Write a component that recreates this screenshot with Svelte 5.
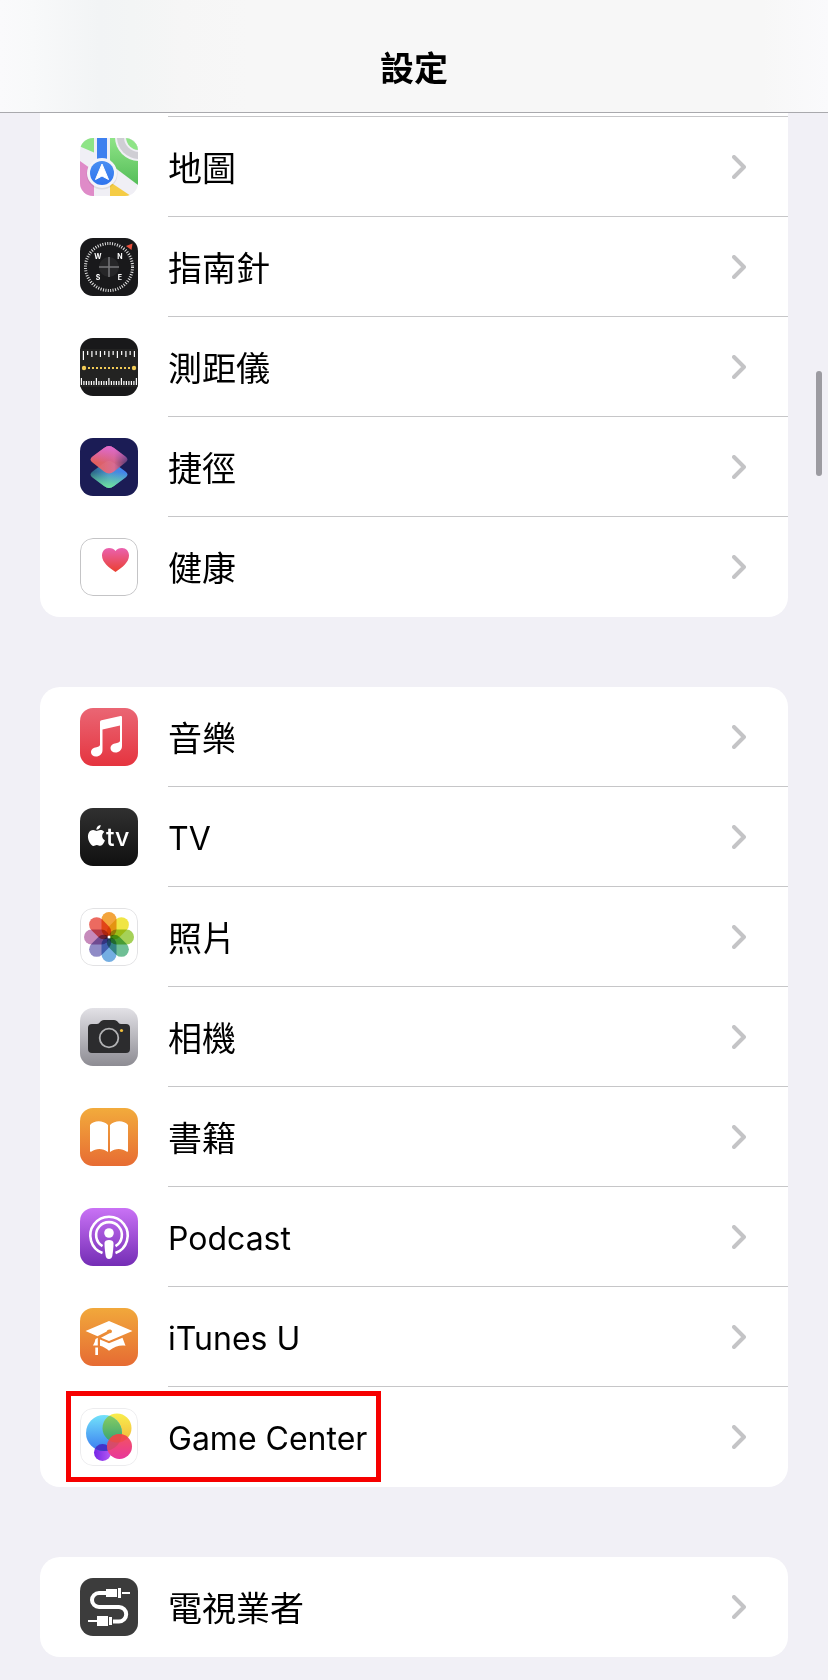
<script lang="ts">
	type Row = { icon: string; label: string; latin?: boolean; highlighted?: boolean };

	const groups: Row[][] = [
		[
			{ icon: 'maps', label: '地圖' },
			{ icon: 'compass', label: '指南針' },
			{ icon: 'measure', label: '測距儀' },
			{ icon: 'shortcuts', label: '捷徑' },
			{ icon: 'health', label: '健康' }
		],
		[
			{ icon: 'music', label: '音樂' },
			{ icon: 'tv', label: 'TV', latin: true },
			{ icon: 'photos', label: '照片' },
			{ icon: 'camera', label: '相機' },
			{ icon: 'books', label: '書籍' },
			{ icon: 'podcast', label: 'Podcast', latin: true },
			{ icon: 'itunesu', label: 'iTunes U', latin: true },
			{ icon: 'gamecenter', label: 'Game Center', latin: true, highlighted: true }
		],
		[{ icon: 'provider', label: '電視業者' }]
	];

	const petals = ['#f3a43c', '#f0e545', '#a5d158', '#6fbf95', '#74aee2', '#8f8bc6', '#c68abb', '#ec6a60'];
	const topTicks = [9, 4, 6, 4, 6, 4, 6, 4, 7, 4, 6, 4, 6];
	const longTicks = [0, 6, 11, 16, 22];
	const edges: Record<string, string> = { health: '#c4c4c6', photos: '#e2e2e4', gamecenter: '#ececee' };
</script>

{#snippet gradient(id: string, from: string, to: string)}
	<linearGradient {id} x1="0" y1="0" x2="0" y2="1">
		<stop offset="0" stop-color={from} />
		<stop offset="1" stop-color={to} />
	</linearGradient>
{/snippet}

{#snippet appIcon(name: string)}
	<svg class="icon" viewBox="0 0 58 58" aria-hidden="true">
		{#if name === 'maps'}
			<defs>
				{@render gradient('maps-green', '#8fe487', '#54bd58')}
				{@render gradient('maps-blue', '#4a8ff2', '#2f74ee')}
			</defs>
			<rect width="58" height="58" fill="#f0eff5" />
			<path d="M0 0h14v14.5L0 8.5z" fill="#8ee486" />
			<path d="M30 0h28v47L30 26z" fill="url(#maps-green)" />
			<circle cx="59" cy="-1" r="24" fill="#f0eff5" />
			<circle cx="59" cy="-1" r="22" fill="#cfced4" />
			<circle cx="59" cy="-1" r="15" fill="#f0eff5" />
			<circle cx="59" cy="-1" r="13" fill="#8ee486" />
			<path d="M0 23l14 10v25H0z" fill="#df8bc8" />
			<path d="M30 44l21 14H30z" fill="#f5cc45" />
			<path d="M17 0h10v24H17z" fill="#3e80ef" />
			<circle cx="22" cy="36" r="15.5" fill="#000" opacity=".08" />
			<circle cx="22" cy="35" r="15" fill="#f4f4f9" />
			<circle cx="22" cy="35" r="12" fill="url(#maps-blue)" />
			<path d="M22 26l6.5 15.5L22 38l-6.5 3.5z" fill="#fff" stroke="#fff" stroke-linejoin="round" />
		{:else if name === 'compass'}
			<rect width="58" height="58" fill="#19191b" />
			<circle cx="29" cy="29" r="10" fill="#262628" />
			<circle cx="29" cy="29" r="23.5" fill="none" stroke="#e4e4e4" stroke-width="3" stroke-dasharray="1 1.46" />
			<path d="M29 19v20M19 29h20" stroke="#77777a" stroke-width="1.5" />
			<path d="M46 8l6.5-2.5L51.5 12z" fill="#e8513d" />
			<g class="points" fill="#fff">
				<text x="18" y="21">W</text>
				<text x="40" y="21">N</text>
				<text x="18" y="42">S</text>
				<text x="40" y="42">E</text>
			</g>
		{:else if name === 'measure'}
			<rect width="58" height="58" fill="#19191a" />
			<rect y="11" width="58" height="38" fill="#232322" />
			<g fill="#fff">
				{#each topTicks as height, i}
					<rect x={2.8 + i * 4.25} y="13" width="1.2" {height} />
				{/each}
				{#each { length: 23 } as _, i}
					{@const height = longTicks.includes(i) ? 7 : 4}
					<rect x={0.8 + i * 2.5} y={47 - height} width="1.2" {height} />
				{/each}
			</g>
			<path d="M8 30h43" stroke="#f2cb57" stroke-width="2" stroke-dasharray="2 2" />
			<circle cx="4" cy="30" r="2.2" fill="#f2cb57" />
			<circle cx="54" cy="30" r="2.2" fill="#f2cb57" />
		{:else if name === 'shortcuts'}
			<defs>
				<linearGradient id="cut-top" x1=".1" y1=".6" x2="1" y2=".6">
					<stop offset="0" stop-color="#f0655c" />
					<stop offset=".6" stop-color="#e46a8c" />
					<stop offset="1" stop-color="#5a3c78" />
				</linearGradient>
				<linearGradient id="cut-glow" x1="0" y1="0" x2="0" y2="1">
					<stop offset="0" stop-color="#ee70dc" />
					<stop offset=".6" stop-color="#ee70dc" stop-opacity="0" />
				</linearGradient>
				<linearGradient id="cut-bottom" x1="0" y1=".4" x2="1" y2=".4">
					<stop offset="0" stop-color="#27627f" />
					<stop offset=".5" stop-color="#4a91d3" />
					<stop offset="1" stop-color="#3f7ff4" />
				</linearGradient>
				<linearGradient id="cut-green" x1="0" y1="0" x2="0" y2="1">
					<stop offset=".4" stop-color="#6fe59b" stop-opacity="0" />
					<stop offset="1" stop-color="#6fe59b" />
				</linearGradient>
			</defs>
			<rect width="58" height="58" fill="#1b1c55" />
			<path d="M24 25q5-4 10 0l11.500 8.500q4 3 0 6L34 48q-5 4-10 0L12.500 39.500q-4-3 0-6z" fill="url(#cut-bottom)" />
			<path d="M24 25q5-4 10 0l11.500 8.500q4 3 0 6L34 48q-5 4-10 0L12.500 39.500q-4-3 0-6z" fill="url(#cut-green)" />
			<g opacity=".93">
				<path d="M24 10q5-4 10 0l11.500 8.500q4 3 0 6L34 33.500q-5 4-10 0L12.500 24.500q-4-3 0-6z" fill="url(#cut-top)" />
				<path d="M24 10q5-4 10 0l11.500 8.500q4 3 0 6L34 33.500q-5 4-10 0L12.500 24.500q-4-3 0-6z" fill="url(#cut-glow)" />
			</g>
		{:else if name === 'health'}
			<defs>{@render gradient('heart', '#ea62b0', '#ea4030')}</defs>
			<rect width="58" height="58" fill="#fff" />
			<path d="M35.500 34C29 29.500 22 24.500 22 17.500C22 13 25 10 29 10c3 0 5.200 1 6.500 3C36.800 11 39 10 42 10c4 0 7 3 7 7.500C49 24.500 42 29.500 35.500 34z" fill="url(#heart)" />
		{:else if name === 'music'}
			<defs>{@render gradient('music-bg', '#ea6674', '#e5343f')}</defs>
			<rect width="58" height="58" fill="url(#music-bg)" />
			<path d="M20 14q0-1.500 1.500-1.800L40.500 8q1.500-.3 1.500 1v29c0 4-3 6.500-6.500 6.500c-3 0-5-1.700-5-4.300c0-3 2.400-4.400 5.500-5q4-.5 4-2.700V17.500l-17.500 4V42c0 4-3 6.500-6.500 6.500c-3 0-5-1.700-5-4.300c0-3 2.400-4.400 5.500-5q3.500-.5 3.500-2.700z" fill="#fff" />
		{:else if name === 'tv'}
			<defs>{@render gradient('tv-bg', '#303030', '#101010')}</defs>
			<rect width="58" height="58" fill="url(#tv-bg)" />
			<path
				transform="translate(6 17) scale(.87)"
				fill="#fff"
				d="M12.152 6.896c-.948 0-2.415-1.078-3.96-1.04-2.04.027-3.91 1.183-4.961 3.014-2.117 3.675-.546 9.103 1.519 12.09 1.013 1.454 2.208 3.09 3.792 3.039 1.52-.065 2.09-.987 3.935-.987 1.831 0 2.35.987 3.96.948 1.637-.026 2.676-1.48 3.676-2.948 1.156-1.688 1.636-3.325 1.662-3.415-.039-.013-3.182-1.221-3.22-4.857-.026-3.04 2.48-4.494 2.597-4.559-1.429-2.09-3.623-2.324-4.39-2.376-2-.156-3.675 1.09-4.61 1.09zM15.53 3.83c.843-1.012 1.4-2.427 1.245-3.83-1.207.052-2.662.805-3.532 1.818-.78.896-1.454 2.338-1.273 3.714 1.338.104 2.715-.688 3.559-1.701"
			/>
			<text class="tv-word" x="26" y="38" fill="#fff">tv</text>
		{:else if name === 'photos'}
			<rect width="58" height="58" fill="#fff" />
			<g class="petals">
				{#each petals as color, i}
					<rect x="21.5" y="4" width="15" height="25" rx="7.5" fill={color} transform="rotate({i * 45} 29 29)" />
				{/each}
			</g>
			<circle cx="29" cy="29" r="1.5" fill="#fff" />
		{:else if name === 'camera'}
			<defs>{@render gradient('camera-bg', '#e2e1e6', '#8d8c93')}</defs>
			<rect width="58" height="58" fill="url(#camera-bg)" />
			<path d="M12 16h5c3 0 3-4 7-4h10c4 0 4 4 7 4h5q4 0 4 4v21q0 4-4 4H12q-4 0-4-4V20q0-4 4-4z" fill="#2c2c2e" />
			<circle cx="29" cy="30" r="9.3" fill="#28282a" stroke="#b2b2b4" stroke-width="1.8" />
			<circle cx="41.5" cy="22.5" r="1.6" fill="#f3c13c" />
		{:else if name === 'books'}
			<defs>{@render gradient('books-bg', '#f2ab3c', '#e76c33')}</defs>
			<rect width="58" height="58" fill="url(#books-bg)" />
			<path d="M10 17c4-5 13-5 18 0v27c-5-4-12-4-16.500-.5q-1.500.8-1.500-.5zM48 17c-4-5-13-5-18 0v27c5-4 12-4 16.500-.5q1.500.8 1.500-.5z" fill="#fff" />
		{:else if name === 'podcast'}
			<defs>{@render gradient('pod-bg', '#c972f5', '#742db5')}</defs>
			<rect width="58" height="58" fill="url(#pod-bg)" />
			<g fill="none" stroke="#fff" stroke-width="2.6">
				<path d="M22.500 45A18.700 18.700 0 1 1 35.500 45" />
				<path d="M22.500 38.200A12.900 12.900 0 1 1 35.500 38.200" />
			</g>
			<circle cx="29" cy="25" r="4.8" fill="#fff" />
			<path d="M24.500 35c0-2 2-3 4.500-3s4.500 1 4.500 3c0 4-.5 9-1.200 13c-.4 2-1.500 3-3.300 3s-2.900-1-3.300-3c-.7-4-1.200-9-1.200-13z" fill="#fff" />
		{:else if name === 'itunesu'}
			<defs>{@render gradient('itu-bg', '#f1a83b', '#e66b33')}</defs>
			<rect width="58" height="58" fill="url(#itu-bg)" />
			<path d="M29 13l23.500 10L29 33l-8-3.300L29.500 25.200q2.500.3 2.500-2c0-2.400-5-2.400-5.300.3L17.500 28.200L5.500 23z" fill="#fff" />
			<path d="M20 31.500l9 3.800l13.500-5.500l3 8c-5-1-11 .5-16.500 5c-3-2.500-5.500-4-9-5zM15.500 31l2.300-1.200v7.700h-4.800q2-3 2.500-6.500zM15.300 39.500h2.700v7.500h-2.700z" fill="#fff" />
		{:else if name === 'gamecenter'}
			<defs>
				{@render gradient('gc-blue', '#72e2fa', '#3a7cf0')}
				{@render gradient('gc-yellow', '#f9ee4c', '#f2b73e')}
				{@render gradient('gc-pink', '#f4555e', '#e8369b')}
				{@render gradient('gc-green', '#8fd060', '#35a274')}
				<linearGradient id="gc-purple">
					<stop offset="0" stop-color="#7426e6" />
					<stop offset="1" stop-color="#b75af2" />
				</linearGradient>
				<clipPath id="gc-clip"><circle cx="24" cy="25" r="18" /></clipPath>
				<clipPath id="gc-clip-yellow"><circle cx="37" cy="20" r="14.5" /></clipPath>
			</defs>
			<rect width="58" height="58" fill="#fff" />
			<circle cx="22.5" cy="44.5" r="8.5" fill="url(#gc-purple)" />
			<circle cx="37" cy="20" r="14.5" fill="url(#gc-yellow)" />
			<circle cx="24" cy="25" r="18" fill="url(#gc-blue)" />
			<circle cx="37" cy="20" r="14.5" fill="url(#gc-green)" clip-path="url(#gc-clip)" />
			<circle cx="22.5" cy="44.5" r="8.5" fill="#4532c8" clip-path="url(#gc-clip)" />
			<circle cx="39.5" cy="38.5" r="12.5" fill="url(#gc-pink)" />
			<circle cx="39.5" cy="38.5" r="12.5" fill="#b8505c" opacity=".45" clip-path="url(#gc-clip)" />
			<circle cx="39.5" cy="38.5" r="12.5" fill="#f04a3c" opacity=".6" clip-path="url(#gc-clip-yellow)" />
		{:else if name === 'provider'}
			<rect width="58" height="58" fill="#3c3c3c" />
			<path d="M26 15h-7a7 7 0 0 0 0 14h20a7.200 7.200 0 0 1 0 14.400h-6" fill="none" stroke="#fff" stroke-width="4" />
			<path d="M26 11h11v8H26zM38 10h3v10h-3zM42 14h8v2h-8zM17 38h11v10H17zM29 39h3v8h-3zM8 42h9v2H8z" fill="#fff" />
		{/if}
		{#if edges[name]}
			<rect x=".5" y=".5" width="57" height="57" rx="12.5" fill="none" stroke={edges[name]} />
		{/if}
	</svg>
{/snippet}

<div class="screen">
	<header class="navbar">
		<h1>設定</h1>
	</header>

	<main>
		{#each groups as rows, g}
			<ul class="group" class:continued={g === 0}>
				{#each rows as row}
					<li>
						<a class="row" href="#{row.icon}">
							<span class="entry" class:highlighted={row.highlighted}>
								{@render appIcon(row.icon)}
								<span class="label" class:latin={row.latin}>{row.label}</span>
							</span>
							<svg class="chevron" viewBox="0 0 14 24" aria-hidden="true">
								<path d="M2 2l10 10L2 22" />
							</svg>
						</a>
					</li>
				{/each}
			</ul>
		{/each}
	</main>

	<div class="scroll-thumb" aria-hidden="true"></div>
</div>

<style>
	:global(body) {
		margin: 0;
		background: #f1f0f6;
	}

	.screen {
		position: relative;
		min-height: 100vh;
		background: #f1f0f6;
		color: #000;
		font-family: Inter, 'Noto Sans CJK TC', sans-serif;
	}

	.navbar {
		padding: 47px 16px 21px;
		border-bottom: 1px solid #a9a9ad;
		background: linear-gradient(to right, #fafafc 0, #f8f9fa 4%, #f2f4f5 12%, #f3f5f5 16%, #f6f6f6 22%, #f7f7f7 30%, #f7f7f7 92%, #fafafc 100%);
		text-align: center;
	}

	h1 {
		margin: 0;
		font-size: 34px;
		font-weight: 700;
		line-height: 44px;
	}

	main {
		display: flex;
		flex-direction: column;
		gap: 70px;
		padding: 0 40px 23px;
	}

	.group {
		margin: 0;
		padding: 0;
		border-radius: 20px;
		background: #fff;
		list-style: none;
	}

	/* The row above the first visible one is hidden behind the bar */
	.group.continued {
		border-radius: 0 0 20px 20px;
	}
	.group.continued::before {
		content: '';
		display: block;
		height: 3px;
		margin-left: 128px;
		border-bottom: 1px solid #c6c6c8;
	}

	.row {
		display: flex;
		align-items: center;
		justify-content: space-between;
		height: 100px;
		padding: 0 42px 0 40px;
		box-sizing: border-box;
		background: linear-gradient(#c6c6c8, #c6c6c8) 128px 100% / 100% 1px no-repeat;
		color: inherit;
		text-decoration: none;
	}
	li:last-child .row {
		background: none;
	}

	.entry {
		position: relative;
		display: flex;
		align-items: center;
		gap: 30px;
	}

	.entry.highlighted::after {
		content: '';
		position: absolute;
		inset: -17px -14px -16px;
		border: 5px solid #f60000;
	}

	.label {
		padding-top: 4px;
		font-size: 34px;
		line-height: 44px;
		white-space: nowrap;
	}
	.label.latin {
		font-size: 32px;
	}

	.icon {
		flex: none;
		width: 58px;
		height: 58px;
		border-radius: 13px;
		overflow: hidden;
	}

	.points {
		font-size: 7px;
		font-weight: 700;
		text-anchor: middle;
	}

	.tv-word {
		font-size: 25px;
		font-weight: 500;
	}

	.petals {
		isolation: isolate;
	}
	.petals rect {
		mix-blend-mode: multiply;
	}

	.chevron {
		flex: none;
		width: 14px;
		height: 24px;
		fill: none;
		stroke: #c4c4c6;
		stroke-width: 4;
		stroke-linecap: round;
		stroke-linejoin: round;
	}

	.scroll-thumb {
		position: absolute;
		top: 371px;
		right: 6px;
		width: 6px;
		height: 105px;
		border-radius: 3px;
		background: #9c9ba1;
	}
</style>
